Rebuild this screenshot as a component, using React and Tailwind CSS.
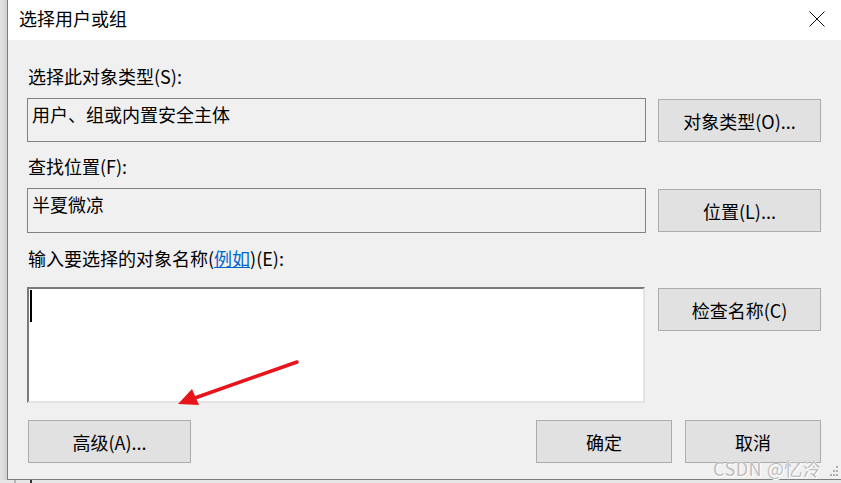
import React from 'react';

const font = { fontFamily: '"Noto Sans CJK SC", "Noto Sans", sans-serif' };

function Button({ children, className = '' }) {
    return (
        <button
            className={`h-[43px] bg-[#e1e1e1] border border-[#adadad] text-[18px] leading-[24px] text-black flex items-center justify-center ${className}`}
        >
            {children}
        </button>
    );
}

function Label({ children, className = '' }) {
    return <div className={`pl-[1px] text-[18px] leading-[24px] text-black ${className}`}>{children}</div>;
}

export default function App() {
    return (
        <div className="relative w-[841px] h-[483px] overflow-hidden bg-[#e8e8e8]" style={font}>
            <div className="flex h-[480px]">
                {/* shadow strip of the window behind */}
                <div className="w-[7px] bg-gradient-to-r from-[#e4e4e4] to-[#d2d2d2]" />

                <div className="flex-1 flex flex-col border-l border-b border-[#7d7d7d]">
                    {/* Title bar */}
                    <div className="h-[40px] shrink-0 bg-white flex items-start justify-between pl-[11px] pr-[16px]">
                        <span className="pt-[6px] text-[18px] leading-[24px] text-black">选择用户或组</span>
                        <svg width="16" height="16" viewBox="0 0 16 16" className="mt-[11px]">
                            <path d="M0.5 0.5 L15.5 15.5 M15.5 0.5 L0.5 15.5" stroke="#111" strokeWidth="1" fill="none" />
                        </svg>
                    </div>

                    {/* Body */}
                    <div className="flex-1 bg-[#f0f0f0] pl-[19px] pr-[20px] flex flex-col">
                        <Label className="mt-[24px]">选择此对象类型(S):</Label>
                        <div className="mt-[10px] flex items-start gap-[12px]">
                            <div className="flex-1 h-[44px] border border-[#828282] bg-[#f0f0f0] px-[4px] pt-[3px] text-[18px] leading-[24px] text-black">
                                用户、组或内置安全主体
                            </div>
                            <Button className="w-[163px] mt-[1px]">对象类型(O)...</Button>
                        </div>

                        <Label className="mt-[12px]">查找位置(F):</Label>
                        <div className="mt-[10px] flex items-start gap-[12px]">
                            <div className="flex-1 h-[45px] border border-[#828282] bg-[#f0f0f0] px-[4px] pt-[3px] text-[18px] leading-[24px] text-black">
                                半夏微凉
                            </div>
                            <Button className="w-[163px] mt-[1px]">位置(L)...</Button>
                        </div>

                        <Label className="mt-[13px]">
                            输入要选择的对象名称(<span className="text-[#0066cc] underline">例如</span>)(E):
                        </Label>
                        <div className="mt-[17px] flex items-start gap-[13px]">
                            <div className="flex-1 h-[116px] bg-white border-t-2 border-l-2 border-t-[#7a7a7a] border-l-[#7a7a7a] border-r-2 border-b-2 border-r-[#e3e3e3] border-b-[#e3e3e3] pl-[1px] pt-[1px]">
                                <div className="w-[2px] h-[32px] bg-black" />
                            </div>
                            <Button className="w-[163px] mt-[1px]">检查名称(C)</Button>
                        </div>

                        <div className="mt-[17px] flex items-start">
                            <Button className="w-[163px] ml-[1px]">高级(A)...</Button>
                            <div className="flex-1" />
                            <Button className="w-[136px]">确定</Button>
                            <Button className="w-[136px] ml-[13px]">取消</Button>
                        </div>
                    </div>
                </div>
            </div>

            {/* strip of the window underneath */}
            <div className="flex h-[3px] bg-[#e6e6e6]">
                <div className="w-[14px]" />
                <div className="w-[2px] bg-[#b5b5b5]" />
                <div className="w-[14px]" />
                <div className="w-[2px] bg-[#333]" />
            </div>

            {/* red annotation arrow */}
            <svg className="absolute left-0 top-0 pointer-events-none" width="841" height="483">
                <line x1="297" y1="362" x2="192" y2="399" stroke="#e8141b" strokeWidth="3.5" strokeLinecap="round" />
                <polygon points="178,404 192,389 199,405" fill="#e8141b" />
            </svg>

            {/* resize grip */}
            <svg className="absolute left-[829px] top-[465px]" width="10" height="12" viewBox="0 0 10 12">
                <rect x="7" y="1" width="2" height="2" fill="#b0b0b0" />
                <rect x="4" y="5" width="2" height="2" fill="#b0b0b0" />
                <rect x="7" y="5" width="2" height="2" fill="#b0b0b0" />
                <rect x="1" y="9" width="2" height="2" fill="#b0b0b0" />
                <rect x="4" y="9" width="2" height="2" fill="#b0b0b0" />
                <rect x="7" y="9" width="2" height="2" fill="#b0b0b0" />
            </svg>

            {/* watermark */}
            <div className="absolute left-[713px] top-[458px] text-[18px] leading-[20px] tracking-[0.5px] text-[#bdbdbd] [text-shadow:0_0_1px_#fff,1px_1px_0_#fff] whitespace-nowrap">
                CSDN @忆泠
            </div>
        </div>
    );
}
